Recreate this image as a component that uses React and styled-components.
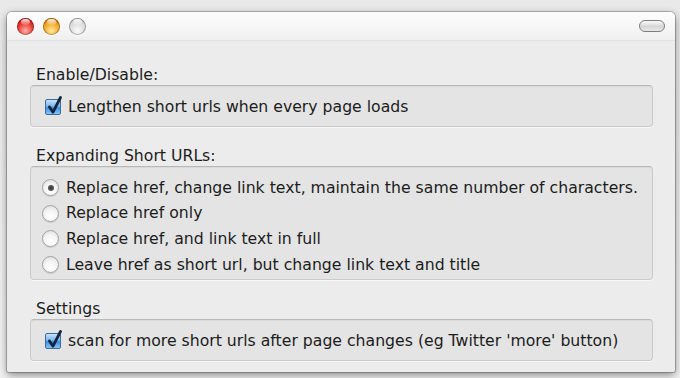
import React from 'react';
import styled, { createGlobalStyle } from 'styled-components';

const GlobalStyle = createGlobalStyle`
  * { margin: 0; padding: 0; box-sizing: border-box; }
  html, body {
    width: 680px;
    height: 378px;
    overflow: hidden;
    background: linear-gradient(#e9e9e9, #f2f2f2);
    font-family: "DejaVu Sans", Verdana, sans-serif;
  }
`;

const Page = styled.div`
  padding: 12px 5px 6px 7px;
  height: 378px;
`;

const Window = styled.div`
  height: 360px;
  border-radius: 5px 5px 2px 2px;
  background: #ececec;
  box-shadow: 0 0 0 1px rgba(0, 0, 0, 0.22), 0 3px 9px rgba(0, 0, 0, 0.45);
  display: flex;
  flex-direction: column;
  overflow: hidden;
`;

const TitleBar = styled.div`
  height: 29px;
  flex: none;
  display: flex;
  align-items: center;
  padding: 0 9px 0 10px;
  gap: 9px;
  background: linear-gradient(#fdfdfd, #f6f6f6 60%, #efefef);
  border-bottom: 1px solid #e2e2e2;
`;

const palette = {
  red: ['#ffb0a8', '#e8322a', '#9c0c08'],
  orange: ['#ffe9a0', '#f2a21e', '#a85e06'],
  grey: ['#fbfbfb', '#dadada', '#b4b4b4'],
};

const Light = styled.span`
  width: 17px;
  height: 17px;
  border-radius: 50%;
  background: ${({ $c }) => `radial-gradient(circle at 50% 75%, ${palette[$c][0]} 0%, ${palette[$c][1]} 55%, ${palette[$c][2]} 100%)`};
  box-shadow: inset 0 0 0 1px rgba(0, 0, 0, 0.28), 0 1px 1px rgba(255, 255, 255, 0.8);
  position: relative;
  &::after {
    content: '';
    position: absolute;
    left: 4px;
    top: 1px;
    width: 9px;
    height: 6px;
    border-radius: 50%;
    background: linear-gradient(rgba(255, 255, 255, 0.9), rgba(255, 255, 255, 0.1));
  }
`;

const Spacer = styled.div`
  flex: 1;
`;

const Pill = styled.span`
  width: 26px;
  height: 12px;
  border-radius: 6px;
  border: 1px solid #7d7d7d;
  background: linear-gradient(#fafafa, #d6d6d6 55%, #e9e9e9);
  margin-right: 1px;
`;

const Content = styled.div`
  flex: 1;
  padding: 25px 22px 0 23px;
  color: #1c1c1c;
  font-size: 15.7px;
`;

const Section = styled.section`
  & + & {
    margin-top: 20px;
  }
`;

const Label = styled.div`
  height: 18px;
  line-height: 18px;
  padding-left: 6px;
  margin-bottom: 1px;
`;

const Box = styled.div`
  border-radius: 4px;
  background: #e4e4e4;
  border: 1px solid #cbcbcb;
  border-top-color: #b8b8b8;
  box-shadow: inset 0 1px 1px rgba(0, 0, 0, 0.05), 0 1px 0 rgba(255, 255, 255, 0.6);
  padding: ${({ $rows }) => ($rows ? '8px 12px 0' : '0 12px')};
  height: ${({ $rows }) => ($rows ? '114px' : '42px')};
  display: flex;
  flex-direction: column;
  justify-content: ${({ $rows }) => ($rows ? 'flex-start' : 'center')};
`;

const Row = styled.label`
  height: 25.6px;
  flex: none;
  display: flex;
  align-items: center;
  gap: 7px;
  white-space: nowrap;
  line-height: 18px;
`;

const CheckRow = styled(Row)`
  padding-left: 2px;
  padding-top: 2px;
`;

const CheckBox = styled.span`
  width: 16px;
  height: 16px;
  flex: none;
  border-radius: 2px;
  border: 1px solid #3f6a9c;
  background: linear-gradient(#c6e2fb, #7bb6ec 45%, #3d8fe0 55%, #86c4f6);
  position: relative;
  svg {
    position: absolute;
    left: 1px;
    top: -4px;
  }
`;

const Radio = styled.span`
  width: 17px;
  height: 17px;
  flex: none;
  margin-left: -1px;
  border-radius: 50%;
  border: 1px solid #a3a3a3;
  background: radial-gradient(circle at 50% 70%, #ffffff 0%, #f4f4f4 50%, #d8d8d8 100%);
  box-shadow: 0 1px 1px rgba(0, 0, 0, 0.12);
  display: flex;
  align-items: center;
  justify-content: center;
  &::after {
    content: '';
    width: 6px;
    height: 6px;
    border-radius: 50%;
    background: ${({ $on }) => ($on ? 'radial-gradient(#3a3a3a, #6a6a6a)' : 'transparent')};
  }
`;

function Check() {
  return (
    <CheckBox>
      <svg width="15" height="19" viewBox="0 0 15 19">
        <path
          d="M2.5 11 L6 16.2 L13.5 1.5"
          fill="none"
          stroke="#14263f"
          strokeWidth="2.8"
          strokeLinecap="round"
          strokeLinejoin="round"
        />
      </svg>
    </CheckBox>
  );
}

const options = [
  'Replace href, change link text, maintain the same number of characters.',
  'Replace href only',
  'Replace href, and link text in full',
  'Leave href as short url, but change link text and title',
];

export default function App() {
  return (
    <>
      <GlobalStyle />
      <Page>
        <Window>
          <TitleBar>
            <Light $c="red" />
            <Light $c="orange" />
            <Light $c="grey" />
            <Spacer />
            <Pill />
          </TitleBar>
          <Content>
            <Section>
              <Label>Enable/Disable:</Label>
              <Box>
                <CheckRow>
                  <Check />
                  Lengthen short urls when every page loads
                </CheckRow>
              </Box>
            </Section>
            <Section>
              <Label>Expanding Short URLs:</Label>
              <Box $rows>
                {options.map((text, i) => (
                  <Row key={text}>
                    <Radio $on={i === 0} />
                    {text}
                  </Row>
                ))}
              </Box>
            </Section>
            <Section>
              <Label>Settings</Label>
              <Box>
                <CheckRow>
                  <Check />
                  scan for more short urls after page changes (eg Twitter 'more' button)
                </CheckRow>
              </Box>
            </Section>
          </Content>
        </Window>
      </Page>
    </>
  );
}
